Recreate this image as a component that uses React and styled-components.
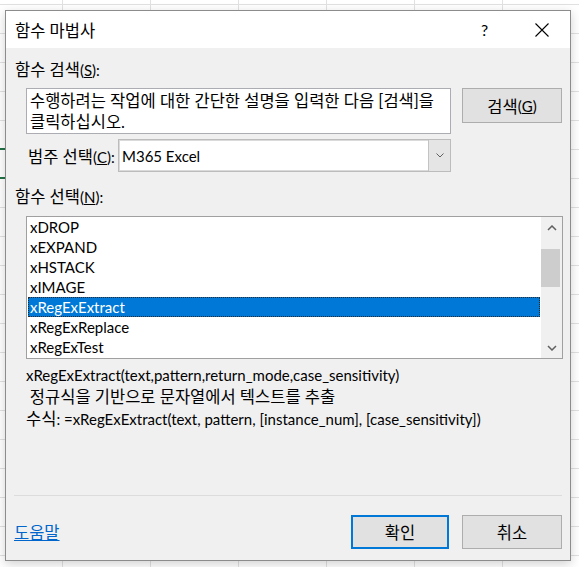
import React from "react";
import styled, { createGlobalStyle } from "styled-components";

const GlobalStyle = createGlobalStyle`
  html, body {
    margin: 0;
    padding: 0;
  }
  body {
    font-family: Lato, "Noto Sans CJK KR", sans-serif;
    font-size: 15px;
    color: #000;
  }
`;

// Hangul in the dialog runs a little larger than the latin text
const Ko = styled.span`
  font-size: 16.5px;
`;

const Sheet = styled.div`
  position: relative;
  width: 579px;
  height: 567px;
  overflow: hidden;
  box-sizing: border-box;
  padding: 10px 0 0 5px;
  background-color: #fff;
  background-image: linear-gradient(to right, #e1e1e1 1px, transparent 1px),
    linear-gradient(to bottom, #e1e1e1 1px, transparent 1px);
  background-size: 88px 100%, 100% 29px;
  background-position: 62px 0, 0 4px;
`;

const SelectedCell = styled.div`
  position: absolute;
  left: -30px;
  top: 148px;
  width: 92px;
  height: 31px;
  box-sizing: border-box;
  border: 2px solid #217346;
`;

const Dialog = styled.div`
  position: relative;
  z-index: 1;
  width: 566px;
  height: 551px;
  box-sizing: border-box;
  border: 1px solid #8c8c8c;
  background: #f0f0f0;
  display: flex;
  flex-direction: column;
  box-shadow: 0 3px 10px rgba(0, 0, 0, 0.18);
`;

const TitleBar = styled.div`
  height: 37px;
  flex-shrink: 0;
  background: #fff;
  display: flex;
  align-items: center;
  padding-left: 9px;
`;

const Title = styled.div`
  flex: 1;
`;

const TitleButton = styled.div`
  width: 57px;
  height: 37px;
  display: flex;
  align-items: center;
  justify-content: center;
  font-size: 16px;
`;

const Body = styled.div`
  flex: 1;
  display: flex;
  flex-direction: column;
  padding: 12px 8px 11px 9px;
`;

const Label = styled.div`
  line-height: 20px;
  margin-top: ${(p) => p.$top || 0}px;
  white-space: nowrap;
`;

const SearchRow = styled.div`
  display: flex;
  align-items: flex-start;
  margin-top: 8px;
`;

const SearchBox = styled.div`
  width: 425px;
  height: 46px;
  box-sizing: border-box;
  margin-left: 11px;
  border: 1px solid #abadb3;
  background: #fff;
  padding: 2px 3px;
  line-height: 21px;
  white-space: nowrap;
`;

const Button = styled.div`
  width: ${(p) => p.$width || 100}px;
  height: ${(p) => p.$height || 34}px;
  box-sizing: border-box;
  margin-left: ${(p) => p.$left || 0}px;
  display: flex;
  align-items: center;
  justify-content: center;
  background: #e1e1e1;
  border: ${(p) => (p.$default ? "2px solid #0078d7" : "1px solid #adadad")};
`;

const CategoryRow = styled.div`
  display: flex;
  align-items: center;
  margin-top: 5px;
  margin-left: 13px;
`;

const CategoryLabel = styled.div`
  width: 90px;
  white-space: nowrap;
`;

const Select = styled.div`
  width: 333px;
  height: 33px;
  box-sizing: border-box;
  border: 1px solid #bcbcbc;
  box-shadow: inset 0 0 0 1px #dadada;
  background: #fff;
  display: flex;
`;

const SelectValue = styled.div`
  flex: 1;
  display: flex;
  align-items: center;
  padding-left: 3px;
`;

const SelectArrow = styled.div`
  width: 21px;
  background: #e5e5e5;
  border-left: 1px solid #c3c3c3;
  display: flex;
  align-items: center;
  justify-content: center;
  color: #606060;
`;

const ListBox = styled.div`
  width: 537px;
  height: 143px;
  box-sizing: border-box;
  margin: 9px 0 0 11px;
  border: 1px solid #a0a0a0;
  background: #fff;
  display: flex;
`;

const Rows = styled.div`
  flex: 1;
  padding: 0 1px;
`;

const Row = styled.div`
  height: 20px;
  line-height: 20px;
  padding-left: 2px;
  background: ${(p) => (p.$selected ? "#0078d7" : "transparent")};
  color: ${(p) => (p.$selected ? "#fff" : "#000")};
  outline: ${(p) => (p.$selected ? "1px dotted #2a2a2a" : "none")};
  outline-offset: -1px;
`;

const ScrollBar = styled.div`
  width: 21px;
  background: #f0f0f0;
  display: flex;
  flex-direction: column;
`;

const ScrollArrow = styled.div`
  height: 21px;
  display: flex;
  align-items: center;
  justify-content: center;
  color: #606060;
`;

const ScrollTrack = styled.div`
  flex: 1;
  padding-top: 11px;
`;

const Thumb = styled.div`
  height: 38px;
  margin-right: 2px;
  background: #cdcdcd;
`;

const Description = styled.div`
  margin-top: 5px;
  margin-left: 11px;
  line-height: 22px;
`;

const DescLine = styled.div`
  white-space: pre;
`;

const Separator = styled.div`
  margin-top: auto;
  height: 1px;
  margin-left: -1px;
  background: #dcdcdc;
`;

const Footer = styled.div`
  display: flex;
  align-items: center;
  margin-top: 19px;
`;

const HelpLink = styled.a`
  margin-left: -1px;
  margin-right: auto;
  color: #0066cc;
  text-decoration: underline;
`;

const Chevron = ({ up }) => (
  <svg width="10" height="6" viewBox="0 0 10 6">
    <polyline
      points={up ? "1,5 5,1 9,5" : "1,1 5,5 9,1"}
      fill="none"
      stroke="currentColor"
      strokeWidth="1.5"
    />
  </svg>
);

const items = [
  "xDROP",
  "xEXPAND",
  "xHSTACK",
  "xIMAGE",
  "xRegExExtract",
  "xRegExReplace",
  "xRegExTest",
];

const App = () => {
  const selected = "xRegExExtract";
  return (
    <Sheet>
      <GlobalStyle />
      <SelectedCell />
      <Dialog>
        <TitleBar>
          <Title>
            <Ko>함수 마법사</Ko>
          </Title>
          <TitleButton>?</TitleButton>
          <TitleButton>
            <svg width="14" height="14" viewBox="0 0 14 14">
              <path d="M0.5 0.5 L13.5 13.5 M13.5 0.5 L0.5 13.5" stroke="#000" strokeWidth="1.1" />
            </svg>
          </TitleButton>
        </TitleBar>
        <Body>
          <Label>
            <Ko>함수 검색</Ko>(<u>S</u>):
          </Label>
          <SearchRow>
            <SearchBox>
              <Ko>수행하려는 작업에 대한 간단한 설명을 입력한 다음 [검색]을</Ko>
              <br />
              <Ko>클릭하십시오.</Ko>
            </SearchBox>
            <Button $left={11} $height={35}>
              <Ko>검색</Ko>(<u>G</u>)
            </Button>
          </SearchRow>
          <CategoryRow>
            <CategoryLabel>
              <Ko>범주 선택</Ko>(<u>C</u>):
            </CategoryLabel>
            <Select>
              <SelectValue>M365 Excel</SelectValue>
              <SelectArrow>
                <svg width="8" height="5" viewBox="0 0 8 5">
                  <polyline points="0.5,0.5 4,4 7.5,0.5" fill="none" stroke="currentColor" strokeWidth="1" />
                </svg>
              </SelectArrow>
            </Select>
          </CategoryRow>
          <Label $top={15}>
            <Ko>함수 선택</Ko>(<u>N</u>):
          </Label>
          <ListBox>
            <Rows>
              {items.map((name) => (
                <Row key={name} $selected={name === selected}>
                  {name}
                </Row>
              ))}
            </Rows>
            <ScrollBar>
              <ScrollArrow>
                <Chevron up />
              </ScrollArrow>
              <ScrollTrack>
                <Thumb />
              </ScrollTrack>
              <ScrollArrow>
                <Chevron />
              </ScrollArrow>
            </ScrollBar>
          </ListBox>
          <Description>
            <DescLine>xRegExExtract(text,pattern,return_mode,case_sensitivity)</DescLine>
            <DescLine>
              {" "}
              <Ko>정규식을 기반으로 문자열에서 텍스트를 추출</Ko>
            </DescLine>
            <DescLine>
              <Ko>수식</Ko>: =xRegExExtract(text, pattern, [instance_num], [case_sensitivity])
            </DescLine>
          </Description>
          <Separator />
          <Footer>
            <HelpLink>
              <Ko>도움말</Ko>
            </HelpLink>
            <Button $default $width={98}>
              <Ko>확인</Ko>
            </Button>
            <Button $left={13}>
              <Ko>취소</Ko>
            </Button>
          </Footer>
        </Body>
      </Dialog>
    </Sheet>
  );
};

export default App;
